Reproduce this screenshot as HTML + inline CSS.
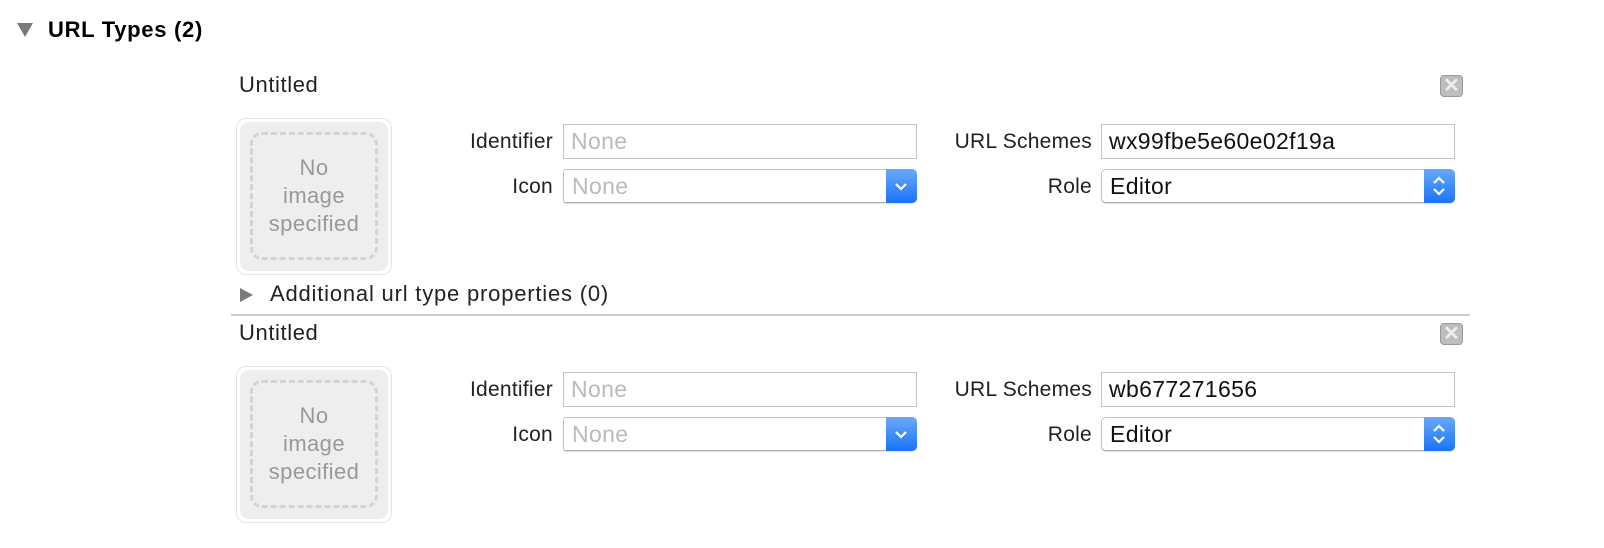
<!DOCTYPE html>
<html><head><meta charset="utf-8"><style>
body{margin:0;width:1604px;height:530px;background:#fff;font-family:"Liberation Sans",sans-serif;position:relative;overflow:hidden;color:#222}
.a{position:absolute}
.tri{width:0;height:0;border-left:8px solid transparent;border-right:8px solid transparent;border-top:14px solid #7a7a7a}
.rtri{width:0;height:0;border-top:7px solid transparent;border-bottom:7px solid transparent;border-left:13px solid #7a7a7a}
.lbl{font-size:21px;letter-spacing:.25px;text-align:right;width:200px;line-height:35px}
.inp{border:1px solid #c4c4c4;box-sizing:border-box;height:35px;font-size:23px;letter-spacing:.35px;line-height:33px;padding-left:7px;background:#fff}
.sel{border:1px solid #c4c4c4;border-bottom-color:#aaa;box-sizing:border-box;height:34px;border-radius:5px;font-size:23px;letter-spacing:.35px;line-height:33px;padding-left:8px;background:#fff;box-shadow:0 1px 1px rgba(0,0,0,.12)}
.blue{position:absolute;right:-1px;top:-1px;width:31px;height:34px;background:linear-gradient(#69a9fa,#1a74f8);border-radius:0 5px 5px 0}
.well{border:1px solid #e4e4e4;border-radius:10px;box-sizing:border-box}
.xb{width:23px;height:22px;background:#bdbdbd;border:1px solid #9a9a9a;border-radius:4px;box-sizing:border-box;color:#eee;font-size:20px;line-height:20px;text-align:center;font-weight:bold}
.ut{font-size:22px;letter-spacing:.6px}
.nis{text-align:center;font-size:22px;letter-spacing:.4px;line-height:28px;color:#999}
</style></head><body>
<div class="a tri" style="left:17px;top:23px"></div>
<div class="a" style="left:48px;top:17px;font-size:22px;letter-spacing:.7px;font-weight:bold;color:#000">URL Types (2)</div>

<div class="a" style="left:0;top:0;width:1604px;height:300px">
<div class="a ut" style="left:239px;top:72px">Untitled</div>
<div class="a xb" style="left:1440px;top:75px">✕</div>
<div class="a well" style="left:236px;top:118px;width:156px;height:157px"></div>
<div class="a" style="left:240px;top:122px;width:148px;height:149px;background:#eee;border-radius:9px"></div>
<div class="a" style="left:250px;top:132px;width:128px;height:128px;border:3px dashed #d4d4d4;border-radius:12px;box-sizing:border-box"></div>
<div class="a nis" style="left:240px;top:154px;width:148px">No<br>image<br>specified</div>
<div class="a lbl" style="left:353px;top:124px">Identifier</div>
<div class="a inp" style="left:563px;top:124px;width:354px;color:#bbb">None</div>
<div class="a lbl" style="left:353px;top:169px">Icon</div>
<div class="a sel" style="left:563px;top:169px;width:354px;color:#bbb;border-radius:3px 5px 5px 3px">None<div class="blue"><svg width="31" height="34"><path d="M10 15l5 5 5-5" stroke="#fff" stroke-width="2.2" fill="none"/></svg></div></div>
<div class="a lbl" style="left:892px;top:124px">URL Schemes</div>
<div class="a inp" style="left:1101px;top:124px;width:354px;color:#111">wx99fbe5e60e02f19a</div>
<div class="a lbl" style="left:892px;top:169px">Role</div>
<div class="a sel" style="left:1101px;top:169px;width:354px;color:#111">Editor<div class="blue"><svg width="31" height="34"><path d="M10 14l5-5 5 5M10 20l5 5 5-5" stroke="#fff" stroke-width="2.2" fill="none"/></svg></div></div>
</div>

<div class="a rtri" style="left:240px;top:288px"></div>
<div class="a" style="left:270px;top:281px;font-size:22px;letter-spacing:.8px">Additional url type properties (0)</div>
<div class="a" style="left:231px;top:314px;width:1239px;height:2px;background:#ccc"></div>

<div class="a" style="left:0;top:248px;width:1604px;height:300px">
<div class="a ut" style="left:239px;top:72px">Untitled</div>
<div class="a xb" style="left:1440px;top:75px">✕</div>
<div class="a well" style="left:236px;top:118px;width:156px;height:157px"></div>
<div class="a" style="left:240px;top:122px;width:148px;height:149px;background:#eee;border-radius:9px"></div>
<div class="a" style="left:250px;top:132px;width:128px;height:128px;border:3px dashed #d4d4d4;border-radius:12px;box-sizing:border-box"></div>
<div class="a nis" style="left:240px;top:154px;width:148px">No<br>image<br>specified</div>
<div class="a lbl" style="left:353px;top:124px">Identifier</div>
<div class="a inp" style="left:563px;top:124px;width:354px;color:#bbb">None</div>
<div class="a lbl" style="left:353px;top:169px">Icon</div>
<div class="a sel" style="left:563px;top:169px;width:354px;color:#bbb;border-radius:3px 5px 5px 3px">None<div class="blue"><svg width="31" height="34"><path d="M10 15l5 5 5-5" stroke="#fff" stroke-width="2.2" fill="none"/></svg></div></div>
<div class="a lbl" style="left:892px;top:124px">URL Schemes</div>
<div class="a inp" style="left:1101px;top:124px;width:354px;color:#111">wb677271656</div>
<div class="a lbl" style="left:892px;top:169px">Role</div>
<div class="a sel" style="left:1101px;top:169px;width:354px;color:#111">Editor<div class="blue"><svg width="31" height="34"><path d="M10 14l5-5 5 5M10 20l5 5 5-5" stroke="#fff" stroke-width="2.2" fill="none"/></svg></div></div>
</div>
</body></html>
